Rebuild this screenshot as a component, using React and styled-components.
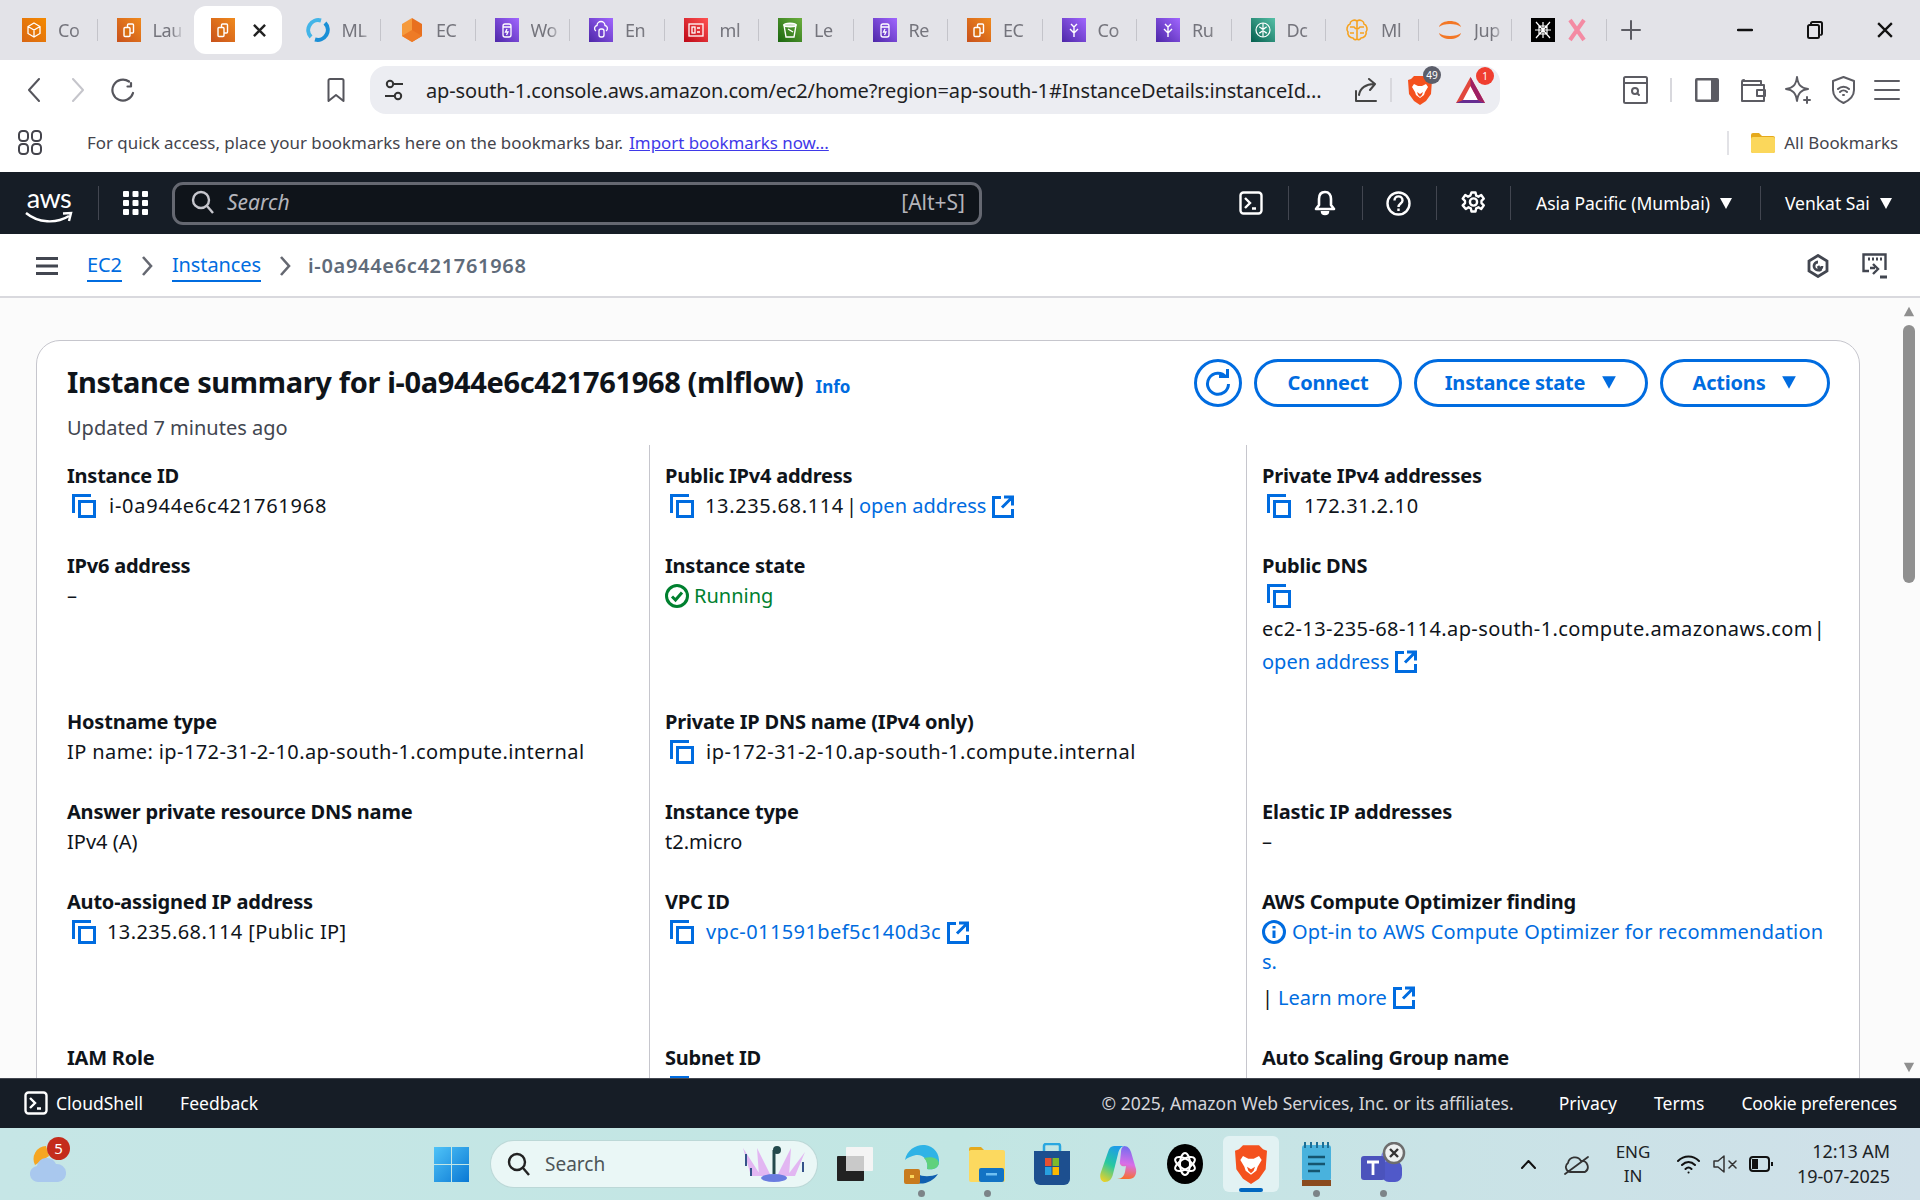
import React from 'react'
import styled, { createGlobalStyle } from 'styled-components'

const blue = '#006ce0'
const uiFont = `"Noto Sans", "Open Sans", sans-serif`

const GlobalStyle = createGlobalStyle`
  html, body { margin: 0; padding: 0; height: 100%; }
  body { font-family: ${uiFont}; color: #0f141a; }
  a { color: inherit; text-decoration: none; }
  svg { display: block; flex: none; }
`

const Page = styled.div`
  width: 1920px;
  height: 1200px;
  display: flex;
  flex-direction: column;
  overflow: hidden;
  background: #fff;
`

/* browser chrome */
const TabStrip = styled.div`
  height: 60px;
  flex: none;
  display: flex;
  align-items: center;
  padding-left: 8px;
  background: #e3e3e8;
`
const Tab = styled.div`
  width: ${p => p.$w || 94.5}px;
  height: 48px;
  flex: none;
  box-sizing: border-box;
  display: flex;
  align-items: center;
  gap: 12px;
  padding-left: 14px;
  position: relative;
  font-size: 18px;
  color: #74747c;
  ${p => p.$sep && `
    &::after {
      content: '';
      position: absolute;
      right: 5px;
      top: 13px;
      height: 22px;
      width: 1px;
      background: #c4c4ca;
    }
  `}
`
const ActiveTab = styled(Tab)`
  width: 88px;
  margin: 0 9.5px 0 -3px;
  padding-left: 17px;
  gap: 18px;
  background: #fff;
  border-radius: 12px;
  color: #2b2b30;
`
const TabText = styled.span`
  width: 32px;
  overflow: hidden;
  white-space: nowrap;
  letter-spacing: -0.4px;
  -webkit-mask-image: linear-gradient(90deg, #000 55%, transparent);
  mask-image: linear-gradient(90deg, #000 55%, transparent);
`
const NewTab = styled.div`
  width: 22px;
  margin-left: 8px;
`
const WinControls = styled.div`
  margin-left: auto;
  display: flex;
  align-items: center;
`
const WinButton = styled.div`
  width: 70px;
  display: flex;
  align-items: center;
  justify-content: center;
`
const Toolbar = styled.div`
  height: 60px;
  flex: none;
  display: flex;
  align-items: center;
  background: #fff;
  padding-left: 27px;
`
const Slot = styled.div`
  margin-left: ${p => p.$ml || 0}px;
  display: flex;
  align-items: center;
  flex: none;
  position: relative;
`
const AddressBar = styled.div`
  width: 1130px;
  height: 48px;
  margin-left: 25px;
  flex: none;
  box-sizing: border-box;
  padding-left: 15px;
  display: flex;
  align-items: center;
  background: #ecedf2;
  border-radius: 16px;
`
const Url = styled.span`
  margin-left: 23px;
  width: 900px;
  font-size: 20px;
  letter-spacing: -0.14px;
  color: #1f1f24;
  white-space: nowrap;
  overflow: hidden;
`
const Divider = styled.div`
  width: 2px;
  height: 24px;
  background: #d8d8dd;
  margin-left: ${p => p.$ml || 0}px;
  flex: none;
`
const CountBadge = styled.span`
  position: absolute;
  top: -9px;
  right: -9px;
  min-width: 18px;
  height: 18px;
  border-radius: 9px;
  background: ${p => p.$bg};
  color: #fff;
  font-size: 10px;
  line-height: 18px;
  text-align: center;
`
const BookmarksBar = styled.div`
  height: 52px;
  flex: none;
  box-sizing: border-box;
  display: flex;
  align-items: center;
  padding: 0 22px 7px 18px;
  background: #fff;
  font-size: 16.9px;
  color: #44444c;
`
const BookmarkHint = styled.span`
  margin-left: 45px;
`
const ImportLink = styled.a`
  margin-left: 6px;
  color: #3f39e8;
  text-decoration: underline;
`
const AllBookmarks = styled.div`
  margin-left: auto;
  display: flex;
  align-items: center;
  gap: 9px;
  padding-left: 22px;
  border-left: 2px solid #e2e2e6;
  height: 24px;
`

/* aws console header */
const TopNav = styled.header`
  height: 62px;
  flex: none;
  display: flex;
  align-items: center;
  padding-left: 25px;
  background: #161d26;
  color: #fff;
`
const Logo = styled.div`
  width: 48px;
  height: 36px;
  display: flex;
  flex-direction: column;
  align-items: center;
  font-family: "Lato", sans-serif;
  font-size: 27px;
  line-height: 26px;
  letter-spacing: -0.5px;
`
const NavSep = styled.div`
  width: 1px;
  height: 34px;
  background: #424650;
  margin-left: ${p => p.$ml}px;
  flex: none;
`
const SearchBox = styled.div`
  width: 810px;
  height: 43px;
  margin-left: 24px;
  flex: none;
  box-sizing: border-box;
  display: flex;
  align-items: center;
  padding: 0 14px 2px 16px;
  background: #0f141a;
  border: 3px solid #656871;
  border-radius: 11px;
  font-size: 21px;
  color: #b4b4bb;
`
const SearchHint = styled.i`
  margin-left: 12px;
`
const Shortcut = styled.span`
  margin-left: auto;
`
const RegionMenu = styled.div`
  margin-left: ${p => p.$ml}px;
  display: flex;
  align-items: center;
  gap: 9px;
  font-size: 17.5px;
  white-space: nowrap;
`

const Crumbs = styled.nav`
  height: 64px;
  flex: none;
  box-sizing: border-box;
  display: flex;
  align-items: center;
  padding: 1px 32px 0 36px;
  background: #fff;
  border-bottom: 2px solid #d9d9de;
  font-size: 20px;
`
const CrumbLink = styled.a`
  margin-left: ${p => p.$ml}px;
  color: ${blue};
  border-bottom: 2px solid ${blue};
  line-height: 30px;
  letter-spacing: -0.1px;
`
const CrumbCurrent = styled.span`
  margin-left: 17px;
  font-weight: 600;
  letter-spacing: 0.68px;
  color: #5f6b7a;
`
const CrumbIcons = styled.div`
  margin-left: auto;
  display: flex;
  align-items: center;
  gap: 32px;
`

/* page body */
const Main = styled.main`
  flex: 1;
  min-height: 0;
  display: flex;
  overflow: hidden;
  background: #fbfbfb;
`
const Content = styled.div`
  width: 1824px;
  margin: 42px 0 0 36px;
  flex: none;
`
const Scrollbar = styled.div`
  margin-left: 43px;
  width: 12px;
  padding: 8px 0 5px;
  flex: none;
  display: flex;
  flex-direction: column;
  align-items: center;
`
const ScrollThumb = styled.div`
  width: 12px;
  height: 258px;
  margin-top: 7px;
  border-radius: 6px;
  background: #8f8f8f;
`
const ScrollDown = styled.div`
  margin-top: auto;
`
const Card = styled.section`
  box-sizing: border-box;
  padding: 0 29px 0 30px;
  background: #fff;
  border: 1px solid #c6c6cd;
  border-radius: 24px;
`
const CardHead = styled.div`
  height: 104px;
  display: flex;
  align-items: flex-start;
`
const TitleBlock = styled.div`
  padding-top: 19px;
`
const Title = styled.h1`
  margin: 0;
  font-size: 29px;
  line-height: 44px;
  font-weight: 700;
  letter-spacing: -0.35px;
  white-space: nowrap;
`
const InfoLink = styled.a`
  margin-left: 12px;
  font-size: 17px;
  font-weight: 700;
  letter-spacing: 0;
  color: ${blue};
`
const Updated = styled.div`
  font-size: 20px;
  line-height: 30px;
  margin-top: 4px;
  color: #424650;
`
const Actions = styled.div`
  margin-left: auto;
  padding-top: 18px;
  display: flex;
  gap: 12px;
`
const PillButton = styled.button`
  box-sizing: border-box;
  width: ${p => p.$w}px;
  height: 48px;
  padding: 0 0 2px;
  display: flex;
  align-items: center;
  justify-content: center;
  gap: 16px;
  background: #fff;
  border: 3px solid ${blue};
  border-radius: 24px;
  color: ${blue};
  font-family: inherit;
  font-size: 20px;
  font-weight: 700;
  letter-spacing: -0.2px;
`
const Grid = styled.div`
  display: grid;
  grid-template-columns: 582px 597px 1fr;
  grid-template-rows: 90px 156px 90px 90px 156px 90px;
`
const Cell = styled.div`
  padding: 16px 0 0 ${p => (p.$first ? 0 : 15)}px;
  border-left: ${p => (p.$first ? 'none' : '1px solid #c6c6cd')};
  font-size: 20px;
  line-height: 30px;
  white-space: nowrap;
`
const Label = styled.div`
  font-weight: 700;
  letter-spacing: -0.22px;
`
const ValueRow = styled.div`
  display: flex;
  align-items: center;
  height: 30px;
`
const Digits = styled.span`
  letter-spacing: ${p => p.$t ?? 0.65}px;
`
const CopyWrap = styled.span`
  margin: 0 ${p => p.$gap || 11}px 0 ${p => p.$offset ?? 5}px;
`
const TextLink = styled.a`
  color: ${blue};
  display: inline-flex;
  align-items: center;
  gap: 6px;
  letter-spacing: ${p => p.$t || 0}px;
`
const Running = styled.span`
  color: #00802f;
  display: inline-flex;
  align-items: center;
  gap: 5px;
`
const LooseLine = styled.div`
  line-height: 33px;
  height: 33px;
  margin-top: ${p => p.$top || 0}px;
  display: flex;
  align-items: center;
`
const Pipe = styled.span`
  margin: 0 ${p => p.$r ?? 2}px 0 ${p => p.$l ?? 2}px;
`

/* bottom bars */
const Footer = styled.footer`
  height: 50px;
  flex: none;
  display: flex;
  align-items: center;
  padding: 0 23px 2px 24px;
  background: #161d26;
  border-top: 1px solid #424650;
  box-sizing: border-box;
  color: #fff;
  font-size: 17.5px;
`
const FooterItem = styled.span`
  margin-left: ${p => p.$ml}px;
  white-space: nowrap;
  letter-spacing: ${p => p.$t || 0}px;
`
const Copyright = styled.span`
  margin-left: auto;
  white-space: nowrap;
  color: #d5d5da;
`
const Taskbar = styled.div`
  height: 72px;
  flex: none;
  display: flex;
  align-items: center;
  padding-left: 30px;
  background: linear-gradient(90deg, #c6e6e6 0%, #c2e6e3 50%, #d0e0e9 100%);
  color: #1c2326;
`
const TaskSlot = styled.div`
  margin-left: ${p => p.$ml || 0}px;
  flex: none;
  height: 72px;
  display: flex;
  align-items: center;
  position: relative;
  ${p => p.$open && `
    &::after {
      content: '';
      position: absolute;
      left: 50%;
      bottom: 3px;
      width: 7px;
      height: 7px;
      margin-left: -3.5px;
      border-radius: 50%;
      background: #7c8488;
    }
  `}
`
const BraveTile = styled(TaskSlot)`
  width: 56px;
  height: 56px;
  justify-content: center;
  background: #e2f2f3;
  border-radius: 6px;
  &::after {
    content: '';
    position: absolute;
    left: 16px;
    bottom: 0;
    width: 24px;
    height: 4px;
    border-radius: 2px;
    background: #0067c0;
  }
`
const WeatherBadge = styled.span`
  position: absolute;
  left: 17px;
  top: 9px;
  width: 23px;
  height: 23px;
  border-radius: 50%;
  background: #c42b1c;
  color: #fff;
  font-size: 15px;
  line-height: 23px;
  text-align: center;
`
const TaskSearch = styled.div`
  width: 326px;
  height: 46px;
  margin-left: 22px;
  flex: none;
  box-sizing: border-box;
  display: flex;
  align-items: center;
  padding: 0 10px 0 16px;
  background: #eaf7f6;
  border-radius: 23px;
  box-shadow: 0 0 0 1px #bcd8d7;
  font-size: 19px;
  color: #4d5558;
`
const TaskSearchText = styled.span`
  margin-left: 14px;
  margin-right: auto;
`
const Lang = styled.div`
  margin-left: ${p => p.$ml}px;
  width: 40px;
  text-align: center;
  font-size: 17px;
  line-height: 24px;
`
const Clock = styled.div`
  margin-left: 4px;
  width: 113px;
  text-align: right;
  font-size: 18px;
  line-height: 25px;
  letter-spacing: -0.1px;
`

/* icons */
const Glyphs = {
  ec2: <g fill="none" stroke="#fff" strokeWidth="1.4"><rect x="10.5" y="6" width="6" height="9" rx="1" /><rect x="7" y="9.5" width="6" height="9" rx="1" fill="#d96f12" /></g>,
  cube: <path d="M12 5l6 3.5v7L12 19l-6-3.5v-7zM6 8.5l6 3.5 6-3.5M12 12v7" fill="none" stroke="#fff" strokeWidth="1.3" />,
  bag: <g fill="none" stroke="#fff" strokeWidth="1.3"><rect x="8" y="6" width="8" height="13" rx="2" /><path d="M8 9h8M12 11l-1.5 3H13l-1.5 3" /></g>,
  cloud: <g fill="none" stroke="#fff" strokeWidth="1.3"><path d="M7 13a3 3 0 0 1 1-5.5 4 4 0 0 1 8 0 3 3 0 0 1 1 5.5" /><rect x="10" y="11" width="5" height="8" rx="2" /></g>,
  card: <g fill="none" stroke="#fff" strokeWidth="1.3"><rect x="5" y="6" width="14" height="12" /><rect x="8" y="9" width="3" height="6" /><path d="M13 10h3M13 14h3" /></g>,
  bucket: <g fill="none" stroke="#fff" strokeWidth="1.4"><path d="M6 7h12l-2 12H8z" /><ellipse cx="12" cy="7" rx="6" ry="1.8" /><path d="M10 11l5 3" /></g>,
  fork: <path d="M9 6l3 3 3-3M12 9v10M8 11l4 4 4-4" fill="none" stroke="#fff" strokeWidth="1.4" />,
  brain: <g fill="none" stroke="#fff" strokeWidth="1.2"><circle cx="12" cy="12" r="7" /><path d="M12 5v14M8 9c2 0 2 2 4 2M16 9c-2 0-2 2-4 2M8 15c2 0 2-2 4-2M16 15c-2 0-2-2-4-2" /></g>,
}

const ServiceIcon = ({ from, to, glyph }) => {
  const id = `g-${from.slice(1)}-${glyph}`
  return (
    <svg width="24" height="24" viewBox="0 0 24 24">
      <defs>
        <linearGradient id={id} x1="0" y1="1" x2="1" y2="0">
          <stop offset="0" stopColor={from} />
          <stop offset="1" stopColor={to} />
        </linearGradient>
      </defs>
      <rect width="24" height="24" fill={`url(#${id})`} />
      {Glyphs[glyph]}
    </svg>
  )
}

const SyncIcon = () => (
  <svg width="24" height="24" viewBox="0 0 24 24" fill="none" strokeWidth="4">
    <path d="M5 19A10 10 0 0 1 15 2.5" stroke="#43b5e8" />
    <path d="M19 5a10 10 0 0 1-10 16.5" stroke="#1a8fd6" />
  </svg>
)
const HexIcon = () => (
  <svg width="24" height="24" viewBox="0 0 24 24">
    <path d="M12 0l10 6v12l-10 6z" fill="#e8701f" />
    <path d="M12 0L2 6v12l10 6z" fill="#f59a3c" />
    <path d="M2 18l10-6 10 6-10 6z" fill="#ee7b26" />
  </svg>
)
const BrainOutline = () => (
  <svg width="24" height="24" viewBox="0 0 24 24" fill="none" stroke="#f6a21e" strokeWidth="1.6">
    <path d="M12 3C9 1 5 3 5 6c-3 1-4 6-2 8-1 3 2 6 5 6 1 2 3 2 4 1 1 1 3 1 4-1 3 0 6-3 5-6 2-2 1-7-2-8 0-3-4-5-7-3zM12 3v18M5 9h4l2 2M19 9h-4l-2 2M5 15h4M19 15h-4" />
  </svg>
)
const JupyterIcon = () => (
  <svg width="24" height="24" viewBox="0 0 24 24" fill="#f37726">
    <path d="M1 9c2-8 20-8 22 0-4-4-18-4-22 0zM1 15c2 8 20 8 22 0-4 4-18 4-22 0z" />
  </svg>
)
const BlackTabIcon = () => (
  <svg width="24" height="24" viewBox="0 0 24 24">
    <rect width="24" height="24" fill="#000" />
    <path d="M12 4v16M5 4l14 16M19 4L5 20M4 12h16M8 8h8v8H8z" fill="none" stroke="#fff" strokeWidth="1.2" />
  </svg>
)
const PinkClose = () => (
  <svg width="20" height="24" viewBox="0 0 20 24" fill="none" stroke="#f48ba3" strokeWidth="4">
    <path d="M3 2l14 20M17 2L3 22" />
  </svg>
)
const CloseX = ({ size = 13, sw = 2.6, color = '#222' }) => (
  <svg width={size} height={size} viewBox="0 0 14 14" fill="none" stroke={color} strokeWidth={sw}>
    <path d="M1 1l12 12M13 1L1 13" />
  </svg>
)
const Line = ({ w, h, d, color = '#5c5c63', sw = 2, fill = 'none' }) => (
  <svg width={w} height={h} viewBox={`0 0 ${w} ${h}`} fill={fill} stroke={color} strokeWidth={sw} strokeLinecap="round" strokeLinejoin="round">
    <path d={d} />
  </svg>
)
const BraveLion = ({ w = 24, h = 30 }) => (
  <svg width={w} height={h} viewBox="0 0 24 30">
    <path d="M6 1h12l3 3 3 1-1 14-5 7-6 4-6-4-5-7L0 5l3-1z" fill="#f4511e" />
    <path d="M6 9l4 2h4l4-2 2 3-3 5-1 3-4 3-4-3-1-3-3-5z" fill="#fff" />
    <path d="M9 17l3 2 3-2-1 3-2 2-2-2z" fill="#f4511e" />
  </svg>
)
const BatIcon = () => (
  <svg width="29" height="28" viewBox="0 0 29 28">
    <path d="M14.5 1L29 27H0z" fill="#e2483d" />
    <path d="M14.5 10L22 24H7z" fill="#fff" />
    <path d="M0 27l7-3h15l7 3z" fill="#662d91" />
    <path d="M14.5 1L29 27l-7-3-7.5-14z" fill="#9e1f63" />
  </svg>
)
const CopyIcon = () => (
  <svg width="24" height="24" viewBox="0 0 24 24" fill="none" stroke={blue} strokeWidth="3">
    <path d="M1.5 19V1.5H19" />
    <rect x="7.5" y="7.5" width="15" height="15" />
  </svg>
)
const ExternalIcon = () => (
  <svg width="22" height="23" viewBox="0 0 22 23" fill="none" stroke={blue} strokeWidth="3">
    <path d="M9 2.5H1.5v19h19V14M12 2h8.5v8.5M20 2.5L10 12.5" />
  </svg>
)
const CheckCircle = () => (
  <svg width="24" height="24" viewBox="0 0 24 24" fill="none" stroke="#00802f" strokeWidth="3">
    <circle cx="12" cy="12" r="10.5" />
    <path d="M7 12.5l3.5 3.5L17 8.5" />
  </svg>
)
const InfoCircle = () => (
  <svg width="24" height="24" viewBox="0 0 24 24" fill="none" stroke={blue} strokeWidth="3">
    <circle cx="12" cy="12" r="10.5" />
    <path d="M12 10.5V18M12 6v2.6" />
  </svg>
)
const Caret = ({ size = 14, color = '#fff', up }) => (
  <svg width={size} height={size} viewBox="0 0 14 14">
    <path d={up ? 'M1 12h12L7 1z' : 'M1 2h12L7 13z'} fill={color} />
  </svg>
)
const TermIcon = ({ size = 24, color = '#fff' }) => (
  <svg width={size} height={size} viewBox="0 0 24 24" fill="none" stroke={color} strokeWidth="2.4">
    <rect x="1.5" y="1.5" width="21" height="21" rx="3" />
    <path d="M6 7l5 5-5 5M13 17.5h4" />
  </svg>
)
const AppsGrid = () => (
  <svg width="25" height="24" viewBox="0 0 25 24" fill="#fff">
    {[0, 9.5, 19].map(x => [0, 9, 18].map(y => <rect key={`${x}-${y}`} x={x} y={y} width="6" height="6" rx="1" />))}
  </svg>
)
const SearchIcon = ({ size = 24, color = '#c6c6cd' }) => (
  <svg width={size} height={size} viewBox="0 0 24 24" fill="none" stroke={color} strokeWidth="2.4">
    <circle cx="10" cy="10" r="8" />
    <path d="M16 16l6 7" />
  </svg>
)
const Bell = () => (
  <svg width="24" height="26" viewBox="0 0 24 26" fill="none" stroke="#fff" strokeWidth="2.6" strokeLinejoin="round">
    <path d="M12 2c-4 0-6 3-6 7v6l-3 4h18l-3-4V9c0-4-2-7-6-7z" />
    <path d="M9 21c0 4 6 4 6 0" fill="#fff" />
  </svg>
)
const Help = () => (
  <svg width="25" height="25" viewBox="0 0 25 25" fill="none" stroke="#fff" strokeWidth="2.4">
    <circle cx="12.5" cy="12.5" r="11" />
    <path d="M8.5 9.5c0-5.5 8-5.5 8 0 0 3-4 3-4 6.5M12.5 17.5v2.5" />
  </svg>
)
const Gear = () => (
  <svg width="25" height="25" viewBox="0 0 25 25" fill="none" stroke="#fff" strokeWidth="2.4" strokeLinejoin="round">
    <path d="M10.5 1.5h4l.7 3.2 2.2 1 2.8-1.7 2.6 3.6-2.3 2.3v2.2l2.3 2.3-2.6 3.6-2.8-1.7-2.2 1-.7 3.2h-4l-.7-3.2-2.2-1-2.8 1.7L1.7 14.4 4 12.1V9.9L1.7 7.6l2.6-3.6 2.8 1.7 2.2-1z" />
    <circle cx="12.5" cy="11" r="3.6" />
  </svg>
)
const Chevron = () => (
  <svg width="12" height="20" viewBox="0 0 12 20" fill="none" stroke="#656871" strokeWidth="2.6">
    <path d="M2 1l8 9-8 9" />
  </svg>
)
const Hamburger = () => (
  <svg width="22" height="18" viewBox="0 0 22 18" fill="#424650">
    <rect width="22" height="3" /><rect y="7.5" width="22" height="3" /><rect y="15" width="22" height="3" />
  </svg>
)
const HexStatus = () => (
  <svg width="24" height="24" viewBox="0 0 24 24" fill="none" stroke="#424650" strokeWidth="2.8">
    <path d="M12 1.5l9 5.5v10l-9 5.5L3 17V7z" />
    <path d="M16 12a4 4 0 1 1-4-4M12 12l3 5" />
  </svg>
)
const MonitorPrompt = () => (
  <svg width="26" height="26" viewBox="0 0 26 26" fill="none" stroke="#424650" strokeWidth="2.4">
    <path d="M7 18H1.5V1.5h22V17" />
    <path d="M6 6h2M10 6h2M14 6h2M18 6h2" strokeWidth="3" />
    <path d="M8 15h5M11 11l5 5-5 5" />
    <path d="M18 24h7" strokeWidth="3" />
  </svg>
)
const RefreshIcon = () => (
  <svg width="26" height="28" viewBox="0 0 26 28" fill="none" stroke={blue} strokeWidth="3">
    <path d="M21 9a10.5 10.5 0 1 0 2.5 7" />
    <path d="M14 8.5h8.5V1" />
  </svg>
)
const AwsSmile = () => (
  <svg width="48" height="14" viewBox="0 0 48 14" fill="none" stroke="#fff" strokeWidth="2.4">
    <path d="M1 2c12 10 30 11 43 3" />
    <path d="M38 2.5l8-.5-2 8" />
  </svg>
)
const TuneIcon = () => (
  <svg width="18" height="24" viewBox="0 0 18 24" fill="none" stroke="#333" strokeWidth="2">
    <circle cx="5" cy="6" r="3.2" /><path d="M9 6h9M0 18h9" /><circle cx="13" cy="18" r="3.2" />
  </svg>
)
const FolderIcon = () => (
  <svg width="24" height="20" viewBox="0 0 24 20">
    <path d="M0 2a2 2 0 0 1 2-2h6l3 3h11a2 2 0 0 1 2 2v13a2 2 0 0 1-2 2H2a2 2 0 0 1-2-2z" fill="#e5a91c" />
    <rect y="4" width="24" height="16" rx="2" fill="#fbd75b" />
  </svg>
)

const CopyValue = ({ children, gap, offset }) => (
  <ValueRow>
    <CopyWrap $gap={gap} $offset={offset}><CopyIcon /></CopyWrap>
    {children}
  </ValueRow>
)

const tabs = [
  { text: 'Co', icon: <ServiceIcon from="#d86613" to="#f58a00" glyph="cube" />, sep: true },
  { text: 'Lau', icon: <ServiceIcon from="#c8511b" to="#f08a1d" glyph="ec2" /> },
  { active: true, icon: <ServiceIcon from="#c8511b" to="#f08a1d" glyph="ec2" /> },
  { text: 'ML', icon: <SyncIcon />, sep: true },
  { text: 'EC', icon: <HexIcon />, sep: true },
  { text: 'Wo', icon: <ServiceIcon from="#4d27a8" to="#a166ff" glyph="bag" />, sep: true },
  { text: 'En', icon: <ServiceIcon from="#4d27a8" to="#a166ff" glyph="cloud" />, sep: true },
  { text: 'ml', icon: <ServiceIcon from="#bd0816" to="#ff5252" glyph="card" />, sep: true },
  { text: 'Le', icon: <ServiceIcon from="#1b660f" to="#6cae3e" glyph="bucket" />, sep: true },
  { text: 'Re', icon: <ServiceIcon from="#4d27a8" to="#a166ff" glyph="bag" />, sep: true },
  { text: 'EC', icon: <ServiceIcon from="#c8511b" to="#f08a1d" glyph="ec2" />, sep: true },
  { text: 'Co', icon: <ServiceIcon from="#4d27a8" to="#a166ff" glyph="fork" />, sep: true },
  { text: 'Ru', icon: <ServiceIcon from="#4d27a8" to="#a166ff" glyph="fork" />, sep: true },
  { text: 'Dc', icon: <ServiceIcon from="#055f4e" to="#56c0a7" glyph="brain" />, sep: true },
  { text: 'Ml', icon: <BrainOutline />, sep: true, w: 93 },
  { text: 'Jup', icon: <JupyterIcon />, sep: true, w: 93 },
  { custom: true, icon: <BlackTabIcon />, sep: true },
]

const BrowserChrome = () => (
  <>
    <TabStrip>
      {tabs.map((t, i) => {
        if (t.active) {
          return (
            <ActiveTab key={i}>
              {t.icon}
              <CloseX />
            </ActiveTab>
          )
        }
        return (
          <Tab key={i} $sep={t.sep} $w={t.w}>
            {t.icon}
            {t.custom ? <PinkClose /> : <TabText>{t.text}</TabText>}
          </Tab>
        )
      })}
      <NewTab>
        <Line w={22} h={22} d="M11 2v18M2 11h18" color="#5c5c63" />
      </NewTab>
      <WinControls>
        <WinButton><Line w={16} h={4} d="M1 2h14" color="#111" sw={2.4} /></WinButton>
        <WinButton>
          <Line w={16} h={18} d="M4 4V2.5A1.5 1.5 0 0 1 5.5 1h8A1.5 1.5 0 0 1 15 2.5v10a1.5 1.5 0 0 1-1 1.4M2.5 4h8A1.5 1.5 0 0 1 12 5.5v10a1.5 1.5 0 0 1-1.5 1.5h-8A1.5 1.5 0 0 1 1 15.5v-10A1.5 1.5 0 0 1 2.5 4z" color="#111" />
        </WinButton>
        <WinButton><CloseX size={16} sw={2} color="#111" /></WinButton>
      </WinControls>
    </TabStrip>
    <Toolbar>
      <Line w={13} h={24} d="M12 1L2 12l10 11" color="#55555c" />
      <Slot $ml={32}><Line w={12} h={24} d="M1 1l10 11L1 23" color="#c5c5cb" /></Slot>
      <Slot $ml={27}><Line w={24} h={24} d="M18 3.5A10.5 10.5 0 1 0 22 15M20 5v3.5h-3.5" color="#55555c" sw={2.2} /></Slot>
      <Slot $ml={192}><Line w={18} h={24} d="M1.5 2.5A1.5 1.5 0 0 1 3 1h12a1.5 1.5 0 0 1 1.5 1.5V23L9 17l-7.5 6z" color="#55555c" /></Slot>
      <AddressBar>
        <TuneIcon />
        <Url>ap-south-1.console.aws.amazon.com/ec2/home?region=ap-south-1#InstanceDetails:instanceId...</Url>
        <Slot $ml={29}><Line w={24} h={24} d="M1 13v10h20M4 17c1-7 7-11 15-11M14 1l6 5-5 6" color="#444" /></Slot>
        <Divider $ml={11} />
        <Slot $ml={16}>
          <BraveLion />
          <CountBadge $bg="#5b5e6a">49</CountBadge>
        </Slot>
        <Slot $ml={24}>
          <BatIcon />
          <CountBadge $bg="#f03e2f">1</CountBadge>
        </Slot>
      </AddressBar>
      <Slot $ml={123}>
        <Line w={25} h={28} d="M2.5 1h20A1.5 1.5 0 0 1 24 2.5v23a1.5 1.5 0 0 1-1.5 1.5h-20A1.5 1.5 0 0 1 1 25.5v-23A1.5 1.5 0 0 1 2.5 1zM1 7h23M16 19l-2-2M15 15a3 3 0 1 1-6 0 3 3 0 0 1 6 0z" />
      </Slot>
      <Divider $ml={22} />
      <Slot $ml={22}>
        <svg width="26" height="26" viewBox="0 0 26 26" fill="#5c5c63">
          <path d="M3 1h20a2 2 0 0 1 2 2v20a2 2 0 0 1-2 2H3a2 2 0 0 1-2-2V3a2 2 0 0 1 2-2zm.5 2.5v19H17v-19z" fillRule="evenodd" />
        </svg>
      </Slot>
      <Slot $ml={20}><Line w={26} h={26} d="M3 4h18v4M2 8h22v16H2zM2 8V5a2 2 0 0 1 2-2M25 13h-8v6h8z" /></Slot>
      <Slot $ml={18}><Line w={28} h={30} d="M13 2c1 8 4 11 11 12-7 1-10 4-11 12-1-8-4-11-11-12 7-1 10-4 11-12zM23 22v6M20 25h6" /></Slot>
      <Slot $ml={20}><Line w={23} h={28} d="M11.5 1L22 5v9c0 6-4 10-10.5 13C5 24 1 20 1 14V5zM6 13c3-3 8-3 11 0M8 16c2-2 5-2 7 0M11 19h1" /></Slot>
      <Slot $ml={19}><Line w={26} h={20} d="M1 1h24M1 10h24M1 19h24" /></Slot>
    </Toolbar>
    <BookmarksBar>
      <svg width="24" height="25" viewBox="0 0 24 25" fill="none" stroke="#44444c" strokeWidth="2">
        <rect x="1" y="1" width="9" height="10" rx="3.5" /><rect x="14" y="1" width="9" height="10" rx="3.5" />
        <rect x="1" y="14" width="9" height="10" rx="3.5" /><rect x="14" y="14" width="9" height="10" rx="3.5" />
      </svg>
      <BookmarkHint>For quick access, place your bookmarks here on the bookmarks bar.</BookmarkHint>
      <ImportLink>Import bookmarks now...</ImportLink>
      <AllBookmarks><FolderIcon />All Bookmarks</AllBookmarks>
    </BookmarksBar>
  </>
)

const ConsoleHeader = () => (
  <>
    <TopNav>
      <Logo>aws<AwsSmile /></Logo>
      <NavSep $ml={25} />
      <Slot $ml={24}><AppsGrid /></Slot>
      <SearchBox>
        <SearchIcon />
        <SearchHint>Search</SearchHint>
        <Shortcut>[Alt+S]</Shortcut>
      </SearchBox>
      <Slot $ml={257}><TermIcon /></Slot>
      <NavSep $ml={25} />
      <Slot $ml={24}><Bell /></Slot>
      <NavSep $ml={25} />
      <Slot $ml={23}><Help /></Slot>
      <NavSep $ml={25} />
      <Slot $ml={24}><Gear /></Slot>
      <NavSep $ml={24} />
      <RegionMenu $ml={25}>Asia Pacific (Mumbai) <Caret /></RegionMenu>
      <NavSep $ml={27} />
      <RegionMenu $ml={24}>Venkat Sai <Caret /></RegionMenu>
    </TopNav>
    <Crumbs>
      <Hamburger />
      <CrumbLink $ml={29}>EC2</CrumbLink>
      <Slot $ml={19}><Chevron /></Slot>
      <CrumbLink $ml={19}>Instances</CrumbLink>
      <Slot $ml={18}><Chevron /></Slot>
      <CrumbCurrent>i-0a944e6c421761968</CrumbCurrent>
      <CrumbIcons><HexStatus /><MonitorPrompt /></CrumbIcons>
    </Crumbs>
  </>
)

const SummaryCard = () => (
  <Card>
    <CardHead>
      <TitleBlock>
        <Title>
          Instance summary for i-0a944e6c421761968 (mlflow)
          <InfoLink>Info</InfoLink>
        </Title>
        <Updated>Updated 7 minutes ago</Updated>
      </TitleBlock>
      <Actions>
        <PillButton $w={48}><RefreshIcon /></PillButton>
        <PillButton $w={148}>Connect</PillButton>
        <PillButton $w={234}>Instance state <Caret size={16} color={blue} /></PillButton>
        <PillButton $w={170}>Actions <Caret size={16} color={blue} /></PillButton>
      </Actions>
    </CardHead>
    <Grid>
      <Cell $first>
        <Label>Instance ID</Label>
        <CopyValue gap={13}><Digits $t={0.75}>i-0a944e6c421761968</Digits></CopyValue>
      </Cell>
      <Cell>
        <Label>Public IPv4 address</Label>
        <CopyValue><Digits>13.235.68.114</Digits><Pipe>|</Pipe><TextLink>open address <ExternalIcon /></TextLink></CopyValue>
      </Cell>
      <Cell>
        <Label>Private IPv4 addresses</Label>
        <CopyValue gap={13}><Digits>172.31.2.10</Digits></CopyValue>
      </Cell>

      <Cell $first>
        <Label>IPv6 address</Label>
        <ValueRow>–</ValueRow>
      </Cell>
      <Cell>
        <Label>Instance state</Label>
        <ValueRow><Running><CheckCircle />Running</Running></ValueRow>
      </Cell>
      <Cell>
        <Label>Public DNS</Label>
        <CopyValue />
        <LooseLine $top={1}><Digits $t={0.4}>ec2-13-235-68-114.ap-south-1.compute.amazonaws.com</Digits><Pipe $l={1} $r={0}>|</Pipe></LooseLine>
        <LooseLine><TextLink>open address <ExternalIcon /></TextLink></LooseLine>
      </Cell>

      <Cell $first>
        <Label>Hostname type</Label>
        <ValueRow><Digits $t={0.4}>IP name: ip-172-31-2-10.ap-south-1.compute.internal</Digits></ValueRow>
      </Cell>
      <Cell>
        <Label>Private IP DNS name (IPv4 only)</Label>
        <CopyValue gap={12}><Digits $t={0.5}>ip-172-31-2-10.ap-south-1.compute.internal</Digits></CopyValue>
      </Cell>
      <Cell />

      <Cell $first>
        <Label>Answer private resource DNS name</Label>
        <ValueRow>IPv4 (A)</ValueRow>
      </Cell>
      <Cell>
        <Label>Instance type</Label>
        <ValueRow>t2.micro</ValueRow>
      </Cell>
      <Cell>
        <Label>Elastic IP addresses</Label>
        <ValueRow>–</ValueRow>
      </Cell>

      <Cell $first>
        <Label>Auto-assigned IP address</Label>
        <CopyValue><Digits $t={0.4}>13.235.68.114 [Public IP]</Digits></CopyValue>
      </Cell>
      <Cell>
        <Label>VPC ID</Label>
        <CopyValue gap={12}><TextLink $t={0.42}>vpc-011591bef5c140d3c <ExternalIcon /></TextLink></CopyValue>
      </Cell>
      <Cell>
        <Label>AWS Compute Optimizer finding</Label>
        <ValueRow><TextLink $t={0.22}><InfoCircle />Opt-in to AWS Compute Optimizer for recommendation</TextLink></ValueRow>
        <ValueRow><TextLink>s.</TextLink></ValueRow>
        <LooseLine $top={4}><Pipe $l={0} $r={5}>|</Pipe><TextLink>Learn more <ExternalIcon /></TextLink></LooseLine>
      </Cell>

      <Cell $first>
        <Label>IAM Role</Label>
      </Cell>
      <Cell>
        <Label>Subnet ID</Label>
        <CopyValue />
      </Cell>
      <Cell>
        <Label>Auto Scaling Group name</Label>
      </Cell>
    </Grid>
  </Card>
)

const ConsoleFooter = () => (
  <Footer>
    <TermIcon />
    <FooterItem $ml={8}>CloudShell</FooterItem>
    <FooterItem $ml={37}>Feedback</FooterItem>
    <Copyright>© 2025, Amazon Web Services, Inc. or its affiliates.</Copyright>
    <FooterItem $ml={45}>Privacy</FooterItem>
    <FooterItem $ml={37}>Terms</FooterItem>
    <FooterItem $ml={37} $t={-0.14}>Cookie preferences</FooterItem>
  </Footer>
)

const Weather = () => (
  <svg width="36" height="40" viewBox="0 0 36 40">
    <path d="M16 2a13 13 0 0 0-11 19l14-9z" fill="#f5a623" />
    <path d="M9 38a8 8 0 0 1-2-16 10 10 0 0 1 19-2 9 9 0 0 1 2 18z" fill="#a9c8ee" />
  </svg>
)
const StartIcon = () => (
  <svg width="35" height="35" viewBox="0 0 35 35">
    <defs>
      <linearGradient id="win" x1="0" y1="0" x2="1" y2="1">
        <stop offset="0" stopColor="#4fc3f7" /><stop offset="1" stopColor="#0a78d4" />
      </linearGradient>
    </defs>
    <path d="M0 0h17v17H0zM18 0h17v17H18zM0 18h17v17H0zM18 18h17v17H18z" fill="url(#win)" />
  </svg>
)
const SearchArt = () => (
  <svg width="66" height="40" viewBox="0 0 66 40">
    <path d="M16 4l14 28H18zM50 4L36 32h12zM2 4l18 28H10zM64 8L46 32h8z" fill="#e2b6f2" />
    <path d="M33 6v24" stroke="#23494c" strokeWidth="3" />
    <circle cx="36" cy="6" r="4" fill="#23494c" />
    <ellipse cx="33" cy="34" rx="13" ry="4" fill="#6a7ce0" />
    <path d="M5 10v12M62 18v10M10 24v8" stroke="#35538a" strokeWidth="2" />
  </svg>
)
const TaskView = () => (
  <svg width="36" height="34" viewBox="0 0 36 34">
    <rect x="9" y="0" width="27" height="24" rx="1" fill="#f4f4f4" />
    <rect x="0" y="9" width="27" height="25" rx="1" fill="#222" />
    <rect x="9" y="9" width="18" height="15" fill="#c9c9c9" />
  </svg>
)
const EdgeIcon = () => (
  <svg width="37" height="40" viewBox="0 0 37 40">
    <path d="M2 16C4 5 14 0 22 1c9 1 15 9 14 18-1 6-7 7-12 6 2-9-4-15-11-14-5 1-9 3-11 5z" fill="#2fb3e6" />
    <path d="M36 19c-1 6-7 7-12 6 1-4 0-8-3-11 8-2 14 0 15 5z" fill="#5fd17c" />
    <path d="M10 38c9 4 20 0 25-8-7 3-16 3-20 0z" fill="#0f5fb0" />
    <rect x="1" y="25" width="16" height="15" rx="2" fill="#c87b1d" />
    <rect x="7" y="31" width="4" height="3" fill="#fbd75b" />
  </svg>
)
const ExplorerIcon = () => (
  <svg width="36" height="36" viewBox="0 0 36 36">
    <path d="M0 3a2 2 0 0 1 2-2h10l4 4H0z" fill="#e5a91c" />
    <rect y="4" width="36" height="32" rx="2" fill="#fcd95f" />
    <rect x="10" y="22" width="25" height="14" rx="2" fill="#1273c4" />
    <rect x="17" y="27" width="11" height="2.5" fill="#6fc0f2" />
  </svg>
)
const StoreIcon = () => (
  <svg width="36" height="42" viewBox="0 0 36 42">
    <path d="M10 8V3a2 2 0 0 1 2-2h12a2 2 0 0 1 2 2v5" fill="none" stroke="#2aa7e0" strokeWidth="2.5" />
    <path d="M0 8h36v28a6 6 0 0 1-6 6H6a6 6 0 0 1-6-6z" fill="#1d4f8f" />
    <rect x="11" y="15" width="6.5" height="8" fill="#e8502f" /><rect x="18.5" y="15" width="6.5" height="8" fill="#7eb92b" />
    <rect x="11" y="24" width="6.5" height="8" fill="#28a0e0" /><rect x="18.5" y="24" width="6.5" height="8" fill="#fbb800" />
  </svg>
)
const CopilotIcon = () => (
  <svg width="37" height="38" viewBox="0 0 37 38">
    <defs>
      <linearGradient id="cp1" x1="0.6" y1="0" x2="0.2" y2="1"><stop offset="0" stopColor="#1f9ce8" /><stop offset=".5" stopColor="#26c9a0" /><stop offset="1" stopColor="#e8d12a" /></linearGradient>
      <linearGradient id="cp2" x1="0.6" y1="0" x2="0.5" y2="1"><stop offset="0" stopColor="#6f6cf0" /><stop offset=".55" stopColor="#d86fe8" /><stop offset="1" stopColor="#f7702d" /></linearGradient>
    </defs>
    <path d="M14 1h10c-4 1-5 4-6 8l-5 20c-1 5-4 8-8 8-4 0-6-5-4-10L8 7c1-4 3-6 6-6z" fill="url(#cp1)" />
    <path d="M24 1c4 0 6 3 7 6l5 17c1 6-2 10-7 10H17c5 0 7-3 8-7l1-6c-4 1-7-1-6-5l1-9c0-3 1-5 3-6z" fill="url(#cp2)" />
  </svg>
)
const ChatIcon = () => (
  <svg width="36" height="40" viewBox="0 0 36 40">
    <ellipse cx="18" cy="20" rx="18" ry="20" fill="#000" />
    <g fill="none" stroke="#fff" strokeWidth="2">
      <ellipse cx="18" cy="20" rx="11" ry="5" transform="rotate(30 18 20)" />
      <ellipse cx="18" cy="20" rx="11" ry="5" transform="rotate(90 18 20)" />
      <ellipse cx="18" cy="20" rx="11" ry="5" transform="rotate(150 18 20)" />
    </g>
  </svg>
)
const NotepadIcon = () => (
  <svg width="29" height="46" viewBox="0 0 29 46">
    <rect y="4" width="29" height="36" rx="3" fill="#49b2dd" />
    <rect y="39" width="29" height="6" fill="#8a4b1f" />
    <path d="M3 1v6M9 1v6M15 1v6M21 1v6M26 1v6" stroke="#1c6f96" strokeWidth="2" />
    <path d="M6 16h17M6 23h17M6 30h12" stroke="#15556f" strokeWidth="2.5" />
  </svg>
)
const TeamsIcon = () => (
  <svg width="46" height="44" viewBox="0 0 46 44">
    <circle cx="28" cy="15" r="7" fill="#7b83eb" />
    <rect x="22" y="19" width="20" height="21" rx="7" fill="#5059c9" />
    <rect x="1" y="14" width="24" height="24" rx="3" fill="#4b53bc" />
    <path d="M7 20h12M13 20v13" stroke="#fff" strokeWidth="2.8" />
    <circle cx="34" cy="11" r="10" fill="#eef1f1" stroke="#6d6d6d" strokeWidth="2.5" />
    <path d="M30 7l8 8M38 7l-8 8" stroke="#333" strokeWidth="2.4" />
  </svg>
)

const WindowsTaskbar = () => (
  <Taskbar>
    <TaskSlot><Weather /><WeatherBadge>5</WeatherBadge></TaskSlot>
    <TaskSlot $ml={368}><StartIcon /></TaskSlot>
    <TaskSearch>
      <SearchIcon size={24} color="#222" />
      <TaskSearchText>Search</TaskSearchText>
      <SearchArt />
    </TaskSearch>
    <TaskSlot $ml={20}><TaskView /></TaskSlot>
    <TaskSlot $ml={30} $open><EdgeIcon /></TaskSlot>
    <TaskSlot $ml={29} $open><ExplorerIcon /></TaskSlot>
    <TaskSlot $ml={29}><StoreIcon /></TaskSlot>
    <TaskSlot $ml={30}><CopilotIcon /></TaskSlot>
    <TaskSlot $ml={30}><ChatIcon /></TaskSlot>
    <BraveTile $ml={20}><BraveLion w={32} h={40} /></BraveTile>
    <TaskSlot $ml={23} $open><NotepadIcon /></TaskSlot>
    <TaskSlot $ml={29} $open><TeamsIcon /></TaskSlot>
    <Slot $ml={115}><Line w={15} h={9} d="M1 8l6.5-7L14 8" color="#111" /></Slot>
    <Slot $ml={28}><Line w={25} h={22} d="M1 21L24 4M6 19a5 5 0 0 1-2-9 7 7 0 0 1 13-2 6 6 0 0 1 4 11z" color="#333" sw={1.8} /></Slot>
    <Lang $ml={24}>ENG<br />IN</Lang>
    <Slot $ml={24}><Line w={23} h={20} d="M1 7c6-6 15-6 21 0M5 11c4-4 9-4 13 0M8.5 15c2-2 4-2 6 0M11.5 18.5h.1" color="#111" /></Slot>
    <Slot $ml={13}><Line w={24} h={20} d="M1 7h4l6-5v16l-6-5H1zM16 7l7 7M23 7l-7 7" color="#333" sw={1.5} /></Slot>
    <Slot $ml={12}>
      <svg width="24" height="20" viewBox="0 0 24 20" fill="none" stroke="#111" strokeWidth="2">
        <rect x="1" y="3" width="19" height="14" rx="3" />
        <rect x="3" y="5" width="6" height="10" fill="#111" stroke="none" />
        <path d="M23 8v4" />
      </svg>
    </Slot>
    <Clock>12:13 AM<br />19-07-2025</Clock>
  </Taskbar>
)

export default function App() {
  return (
    <Page>
      <GlobalStyle />
      <BrowserChrome />
      <ConsoleHeader />
      <Main>
        <Content><SummaryCard /></Content>
        <Scrollbar>
          <Caret size={12} color="#8f8f8f" up />
          <ScrollThumb />
          <ScrollDown><Caret size={12} color="#8f8f8f" /></ScrollDown>
        </Scrollbar>
      </Main>
      <ConsoleFooter />
      <WindowsTaskbar />
    </Page>
  )
}
